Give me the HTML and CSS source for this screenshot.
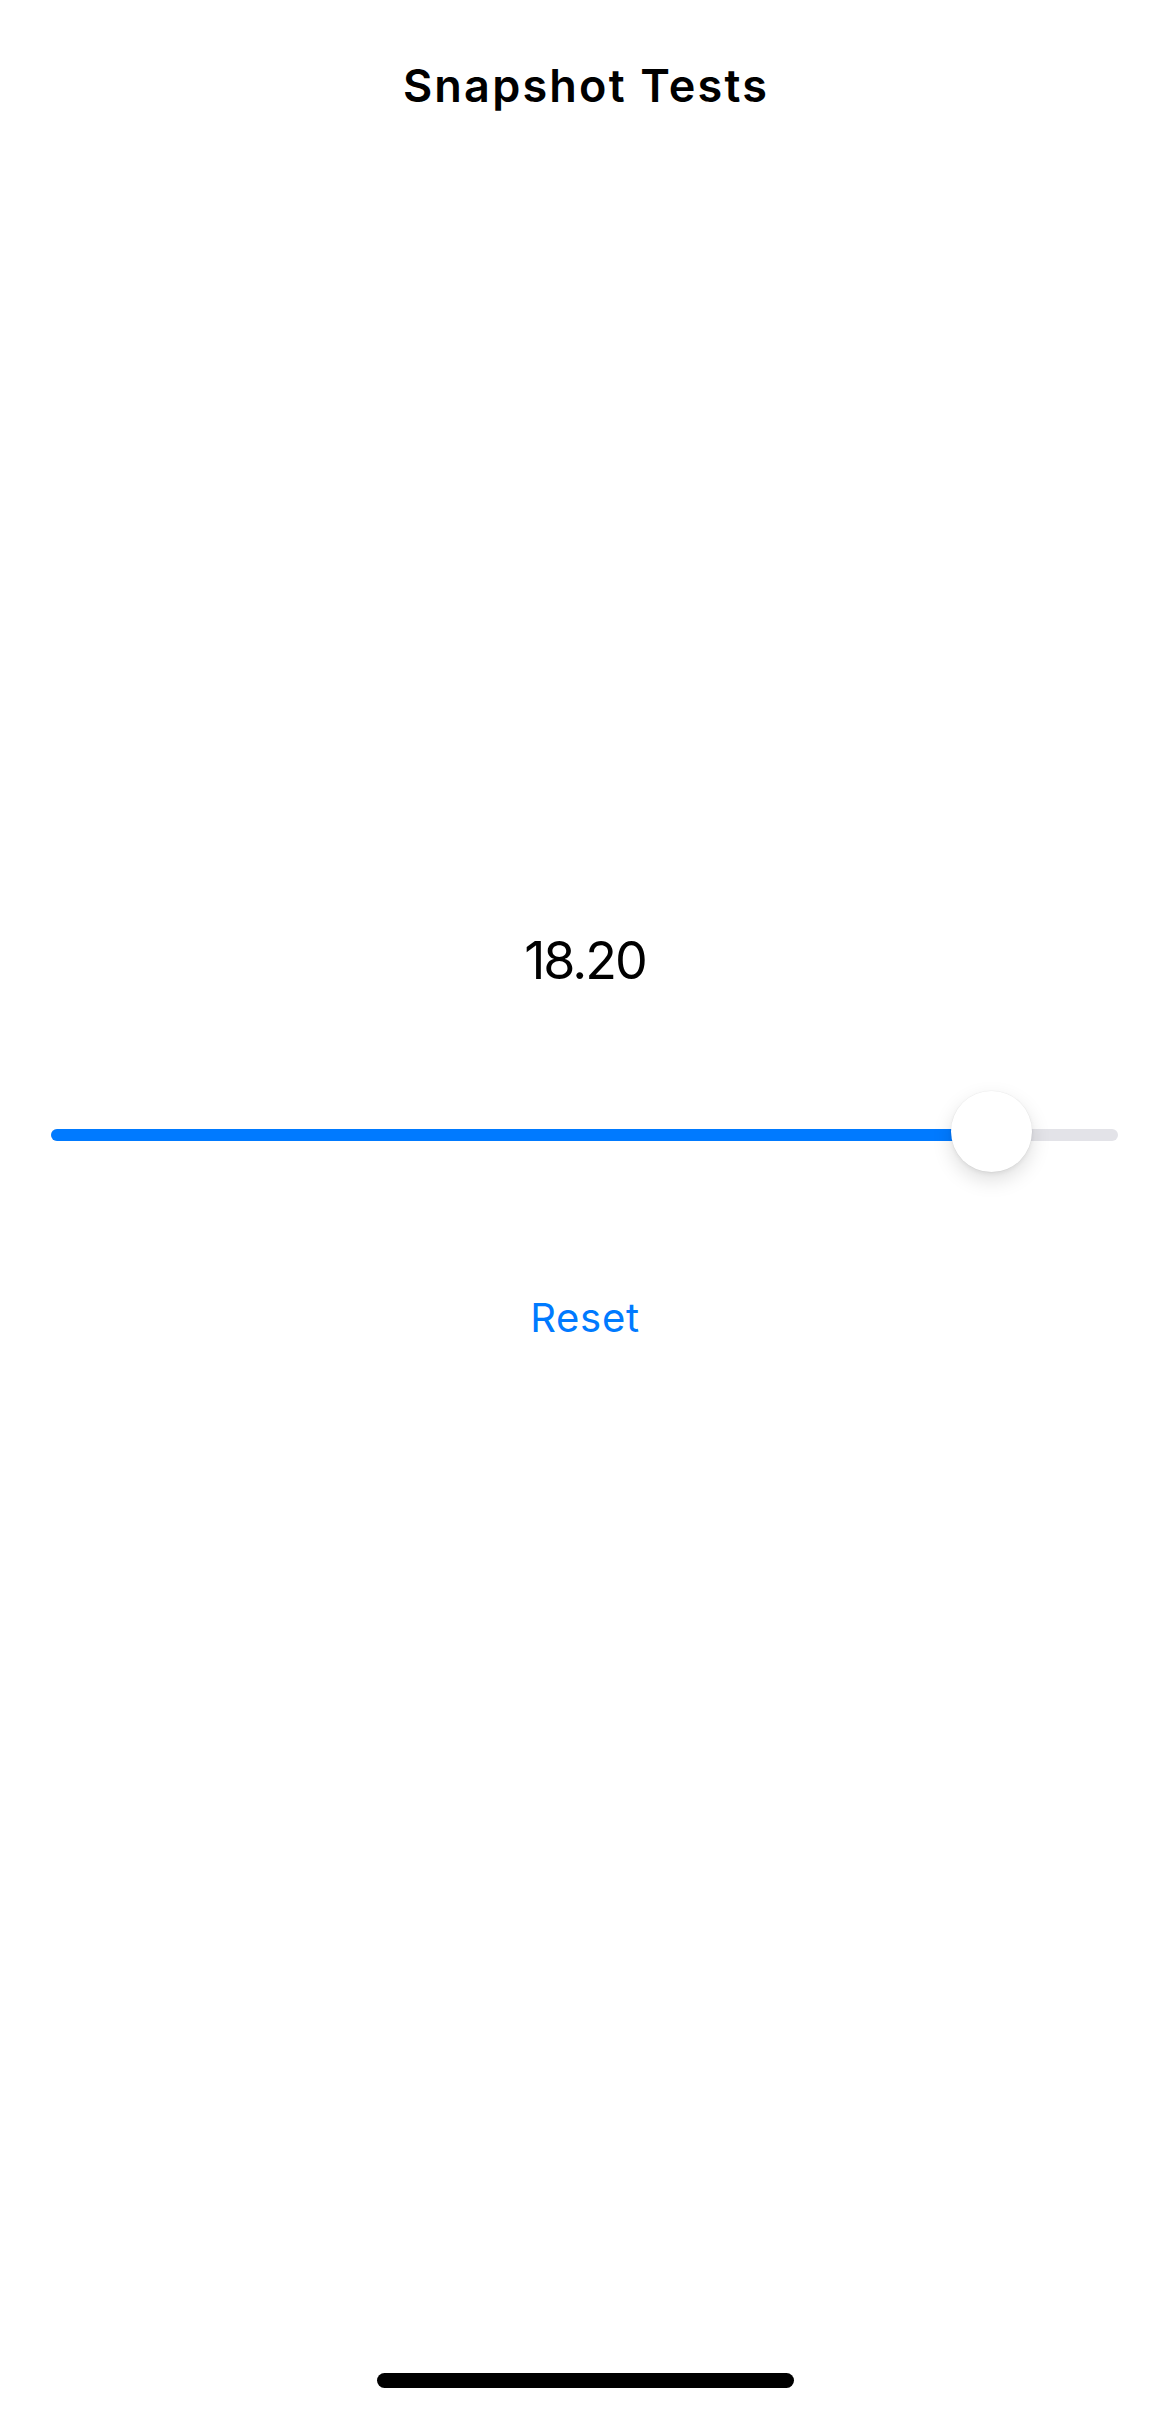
FILE: index.html
```html
<!DOCTYPE html>
<html lang="en">
<head>
<meta charset="utf-8">
<title>Snapshot Tests</title>
<link rel="stylesheet" href="styles.css">
</head>
<body>
<div class="screen">
  <header class="navbar">
    <h1 class="nav-title">Snapshot Tests</h1>
  </header>
  <main class="content">
    <div class="value">18.20</div>
    <div class="slider">
      <div class="track">
        <div class="track-fill" style="width: 91.3%"></div>
        <div class="thumb" style="left: 900px"></div>
      </div>
    </div>
    <button class="reset">Reset</button>
  </main>
  <div class="home-bar"></div>
</div>
</body>
</html>
```
FILE: styles.css
```css
* { box-sizing: border-box; }
html, body {
  margin: 0;
  padding: 0;
  background: #ffffff;
}
body {
  font-family: Inter, "Liberation Sans", Arial, sans-serif;
  color: #000;
}
.screen {
  width: 1170px;
  height: 2412px;
  display: flex;
  flex-direction: column;
  align-items: stretch;
}
.navbar {
  padding-top: 60px;
  display: flex;
  justify-content: center;
}
.nav-title {
  margin: 0;
  font-size: 45px;
  line-height: 52px;
  font-weight: 600;
  letter-spacing: 2.2px;
  padding-left: 2px;
}
.content {
  flex: 1;
  display: flex;
  flex-direction: column;
  align-items: center;
  padding-top: 817px;
}
.value {
  font-size: 52px;
  line-height: 64px;
  font-weight: 400;
  letter-spacing: -2px;
}
.slider {
  align-self: stretch;
  padding: 0 52px 0 51px;
  margin-top: 98px;
  height: 81px;
  display: flex;
  align-items: flex-start;
}
.track {
  position: relative;
  width: 100%;
  height: 12px;
  margin-top: 38px;
  border-radius: 6px;
  background: #e3e3e8;
}
.track-fill {
  height: 100%;
  border-radius: 6px;
  background: #007aff;
}
.thumb {
  position: absolute;
  top: -38px;
  width: 81px;
  height: 81px;
  border-radius: 50%;
  background: #ffffff;
  box-shadow: 0 0 0 0.5px rgba(0, 0, 0, 0.04), 0 2px 4px rgba(0, 0, 0, 0.06), 0 8px 20px rgba(0, 0, 0, 0.13);
}
.reset {
  margin-top: 122px;
  padding: 0;
  border: none;
  background: none;
  font-family: Inter, "Liberation Sans", Arial, sans-serif;
  font-size: 40px;
  line-height: 48px;
  color: #007aff;
  letter-spacing: 0.75px;
}
.home-bar {
  align-self: center;
  width: 417px;
  height: 15px;
  border-radius: 8px;
  background: #000;
  margin-bottom: 24px;
}
```
